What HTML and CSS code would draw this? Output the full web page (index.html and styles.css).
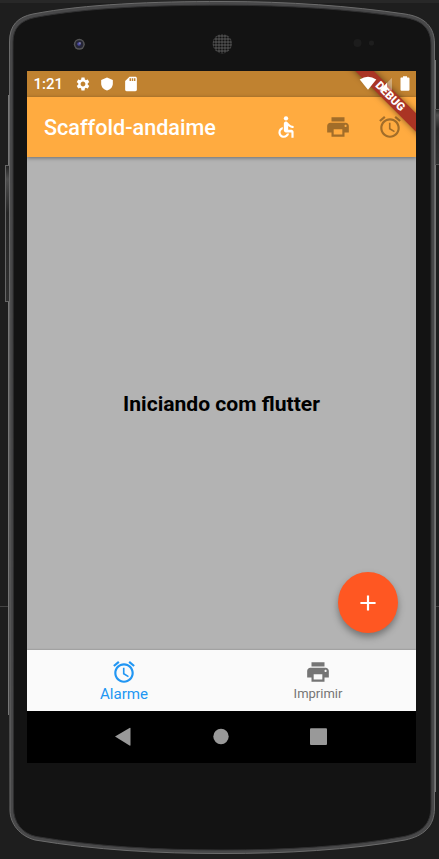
FILE: index.html
```html
<!DOCTYPE html>
<html lang="pt">
<head>
<meta charset="utf-8">
<title>Scaffold-andaime</title>
<link rel="stylesheet" href="styles.css">
</head>
<body>
<svg width="0" height="0" class="defs">
  <symbol id="alarm" viewBox="0 0 24 24"><path d="M22 5.72l-4.6-3.86-1.29 1.53 4.6 3.86L22 5.72zM7.88 3.39L6.6 1.86 2 5.71l1.29 1.53 4.59-3.85zM12.5 8H11v6l4.75 2.85.75-1.23-4-2.37V8zM12 4c-4.97 0-9 4.03-9 9s4.02 9 9 9c4.97 0 9-4.03 9-9s-4.03-9-9-9zm0 16c-3.87 0-7-3.13-7-7s3.13-7 7-7 7 3.13 7 7-3.13 7-7 7z"/></symbol>
  <symbol id="print" viewBox="0 0 24 24"><path d="M19 8H5c-1.66 0-3 1.34-3 3v6h4v4h12v-4h4v-6c0-1.66-1.34-3-3-3zm-3 11H8v-5h8v5zm3-7c-.55 0-1-.45-1-1s.45-1 1-1 1 .45 1 1-.45 1-1 1zm-1-9H6v4h12V3z"/></symbol>
</svg>
<div class="device">
  <svg class="shell" viewBox="0 0 439 859" aria-hidden="true">
    <defs>
      <pattern id="mesh" width="3" height="3" patternUnits="userSpaceOnUse"><rect width="3" height="3" fill="#4c4c4c"/><circle cx="1.5" cy="1.5" r="1.1" fill="#111"/></pattern>
      <linearGradient id="key" x1="0" y1="0" x2="0" y2="1"><stop offset="0" stop-color="#222"/><stop offset=".1" stop-color="#505050"/><stop offset=".35" stop-color="#262626"/><stop offset="1" stop-color="#303030"/></linearGradient>
    </defs>
    <path d="M0 1.5H439" stroke="#282828" stroke-width="3"/>
    <path d="M0 606.5H9M435 606.5H439" stroke="#444"/>
    <path d="M8.5 95V715M435.5 60V792" stroke="#777"/>
    <rect x="5.5" y="165.5" width="4" height="136" fill="url(#key)" stroke="#666"/>
    <rect x="435.5" y="109.5" width="5" height="55" fill="url(#key)" stroke="#555"/>
    <path d="M9.5 42C9.5 25 18 17 33 14C85 4 155 1.5 222 1.5C290 1.5 350 6 405 14C425 17 434.5 27 434.5 44V808C434.5 826 424 836 405 840C350 850 285 853.5 222 853.5C158 853.5 95 850 35 840C20 836 10 824 10 810Z" fill="#484849" stroke="#6c6c6c"/>
    <path d="M13 42C13 28 20.500 20.500 35 17.500C88 7.500 155 5.200 222 5.200C290 5.200 350 9.400 404 17.400C423 20.400 431 29 431 45V806C431 824 422 832.500 404 836.500C350 846.500 285 850 222 850C158 850 95 846.500 36 836.500C22 833.500 13.500 822 13.500 808Z" fill="#131313" stroke="#303031"/>
    <circle cx="79.3" cy="44.3" r="5.5" fill="#555"/><circle cx="79.3" cy="44.3" r="4" fill="#252535"/><circle cx="79" cy="44" r="1.8" fill="#4b4ba0"/><circle cx="80" cy="43" r=".7" fill="#bbc"/>
    <circle cx="222.3" cy="43.7" r="9.7" fill="url(#mesh)"/>
    <circle cx="357.5" cy="43" r="4" fill="#1c1c1c"/><circle cx="371.5" cy="43" r="2.6" fill="#1e1e1e"/>
  </svg>
  <main class="screen">
    <header class="status">
      <span class="time">1:21</span>
      <svg class="ind gear" viewBox="0 0 24 24"><path d="M19.14 12.94c.04-.3.06-.61.06-.94 0-.32-.02-.64-.07-.94l2.03-1.58c.18-.14.23-.41.12-.61l-1.92-3.32c-.12-.22-.37-.29-.59-.22l-2.39.96c-.5-.38-1.03-.7-1.62-.94l-.36-2.54c-.04-.24-.24-.41-.48-.41h-3.84c-.24 0-.43.17-.47.41l-.36 2.54c-.59.24-1.13.57-1.62.94l-2.39-.96c-.22-.08-.47 0-.59.22L2.74 8.87c-.12.21-.08.47.12.61l2.03 1.58c-.05.3-.09.63-.09.94s.02.64.07.94l-2.03 1.58c-.18.14-.23.41-.12.61l1.92 3.32c.12.22.37.29.59.22l2.39-.96c.5.38 1.03.7 1.62.94l.36 2.54c.05.24.24.41.48.41h3.84c.24 0 .44-.17.47-.41l.36-2.54c.59-.24 1.13-.56 1.62-.94l2.39.96c.22.08.47 0 .59-.22l1.92-3.32c.12-.22.07-.47-.12-.61l-2.01-1.58zM12 15.6c-1.98 0-3.6-1.62-3.6-3.6s1.62-3.6 3.6-3.6 3.6 1.62 3.6 3.6-1.62 3.6-3.6 3.6z"/></svg>
      <svg class="ind shield" viewBox="0 0 24 24"><path d="M12 1L2 5v6c0 5.550 4 10.740 10 12 6-1.260 10-6.450 10-12V5z"/></svg>
      <svg class="ind" viewBox="0 0 24 24"><path d="M18 2h-8L4.020 8 4 20c0 1.100.9 2 2 2h12c1.100 0 2-.9 2-2V4c0-1.100-.9-2-2-2zm-6 6h-2V4h2v4zm3 0h-2V4h2v4zm3 0h-2V4h2v4z" transform="translate(-1.200 -1.200) scale(1.100)"/></svg>
    </header>
    <div class="appbar">
      <h1>Scaffold-andaime</h1>
      <svg class="icon light" viewBox="0 0 24 24"><circle cx="12" cy="4" r="2"/><path d="M19 13v-2c-1.540.02-3.090-.75-4.070-1.830l-1.290-1.430c-.17-.19-.38-.34-.61-.45-.01 0-.01-.01-.02-.01H13c-.35-.2-.75-.3-1.190-.26C10.760 7.110 10 8.040 10 9.090V15c0 1.100.9 2 2 2h5v5h2v-5.500c0-1.100-.9-2-2-2h-3v-3.450c1.290 1.070 3.250 1.940 5 1.950zm-6.170 5c-.41 1.160-1.520 2-2.830 2-1.660 0-3-1.340-3-3 0-1.310.84-2.410 2-2.830V12.100c-2.280.46-4 2.480-4 4.900 0 2.760 2.240 5 5 5 2.420 0 4.440-1.720 4.900-4h-2.070z"/></svg>
      <svg class="icon"><use href="#print"/></svg>
      <svg class="icon"><use href="#alarm"/></svg>
    </div>
    <section class="content">
      <p>Iniciando com flutter</p>
      <button class="fab" aria-label="+"><svg class="icon" viewBox="0 0 24 24"><path d="M19 13h-6v6h-2v-6H5v-2h6V5h2v6h6v2z"/></svg></button>
    </section>
    <nav class="tabs">
      <div class="tab active"><svg class="icon"><use href="#alarm"/></svg><span>Alarme</span></div>
      <div class="tab"><svg class="icon"><use href="#print"/></svg><span>Imprimir</span></div>
    </nav>
    <footer class="system">
      <svg viewBox="0 0 389 52"><path d="M88 25.500L102.500 17Q103.500 16.500 103.500 17.500V34Q103.500 35 102.500 34.500Z"/><circle cx="194" cy="25.500" r="7.700"/><rect x="283" y="17.200" width="17" height="16.700" rx="1"/></svg>
    </footer>
    <div class="ribbon"><span>DEBUG</span></div>
    <svg class="signals" viewBox="0 0 60 26"><path d="M2.700 8.500Q11 3 19.300 8.500L11 18.700Z"/><path d="M35 6.800V19.500H22.500Z" opacity=".35"/><path d="M30 11.800V19.500H22.500Z"/><path d="M44 6.500H46V5.200H50V6.500H51.500Q52.500 6.500 52.500 7.500V18.700Q52.500 19.700 51.500 19.700H44.500Q43.500 19.700 43.500 18.700V7Z"/></svg>
  </main>
</div>
</body>
</html>
```

FILE: styles.css
```css
* { box-sizing: border-box; }
body { margin: 0; background: #1e1e1e; font-family: Roboto, sans-serif; overflow: hidden; }
.defs { position: absolute; }
.device { position: relative; width: 439px; height: 859px; padding: 71px 23px 96px 27px; }
.shell { position: absolute; inset: 0; width: 439px; height: 859px; }
.screen { position: relative; display: flex; flex-direction: column; width: 389px; height: 692px; overflow: hidden; background: #b3b3b3; }
.status { display: flex; align-items: center; height: 26px; padding-left: 6.5px; background: #c08230; color: #fff; }
.time { width: 41px; font-size: 15px; font-weight: 500; }
.ind { width: 16px; height: 16px; margin-right: 8px; fill: currentColor; }
.shield { height: 14px; }
.appbar { position: relative; z-index: 1; display: flex; align-items: center; height: 60px; padding: 0 13px 0 17px; background: #ffab40; box-shadow: 0 1px 4px rgba(0,0,0,.4); color: #a26d29; }
h1 { flex: 1; margin: 0; padding-top: 2px; color: #fff; font-size: 21.6px; font-weight: 500; line-height: 26px; }
.icon { display: block; width: 26px; height: 26px; fill: currentColor; }
.appbar .icon + .icon { margin-left: 26px; }
.light { color: #fff; }
.content { position: relative; flex: 1; display: flex; align-items: center; justify-content: center; }
.content p { margin: 0; font-size: 21.1px; font-weight: 700; line-height: 26px; color: #000; white-space: nowrap; }
.fab { position: absolute; right: 18px; bottom: 17px; display: grid; place-items: center; width: 60px; height: 61px; padding: 0; border: 0; border-radius: 50%; background: #ff5722; color: #fff; box-shadow: 0 4px 7px rgba(0,0,0,.35); }
.tabs { position: relative; display: flex; height: 61px; padding-right: 1px; background: #fafafa; box-shadow: 0 0 2px rgba(0,0,0,.3); }
.tab { flex: 1; display: flex; flex-direction: column; align-items: center; padding-top: 9px; color: #757575; font-size: 13px; }
.tab span { line-height: 18px; }
.tab.active { color: #2196f3; font-size: 15.1px; }
.system { height: 52px; background: #000; fill: #999; }
.system svg { display: block; width: 389px; height: 52px; }
.ribbon { position: absolute; z-index: 2; top: 19px; right: -49px; width: 150px; height: 13px; background: #aa3424; box-shadow: 0 0 6px rgba(0,0,0,.5); color: #fff; font-size: 11.4px; font-weight: 900; line-height: 13px; text-align: center; transform: rotate(45deg); }
.signals { position: absolute; z-index: 3; right: -1px; top: 0; width: 60px; height: 26px; fill: #fff; }
```
